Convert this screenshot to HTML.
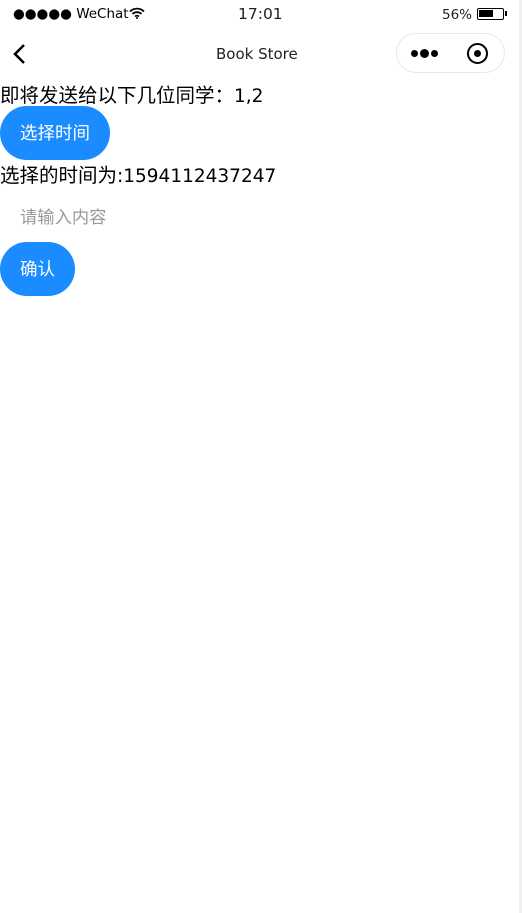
<!DOCTYPE html>
<html><head><meta charset="utf-8"><style>
*{margin:0;padding:0;box-sizing:border-box}
body{width:522px;height:913px;background:#fff;font-family:"DejaVu Sans","Noto Sans CJK SC",sans-serif;position:relative;overflow:hidden;color:#000}
.abs{position:absolute;white-space:nowrap}
.cjk{font-family:"Noto Sans CJK SC",sans-serif}
.num{font-family:"DejaVu Sans",sans-serif;font-size:18.5px}
.btn{position:absolute;left:0;background:#1a8cff;color:#fff;border-radius:27px;height:54px;font-size:17.5px;line-height:54px;text-align:center;font-family:"Noto Sans CJK SC",sans-serif}
</style></head><body>
<div class="abs" style="left:13px;top:4px;font-size:13.5px;line-height:20px;">●●●●● WeChat<svg width="16" height="12" viewBox="0 0 16 12" style="vertical-align:-1px"><path d="M1 4.5a10 10 0 0 1 14 0M3.5 7a6.5 6.5 0 0 1 9 0M6 9.5a3 3 0 0 1 4 0" stroke="#000" stroke-width="1.8" fill="none"/><circle cx="8" cy="11" r="1" fill="#000"/></svg></div>
<div class="abs" style="left:238px;top:4px;font-size:15.5px;line-height:20px;color:#222">17:01</div>
<div class="abs" style="left:442px;top:5px;font-size:13.5px;line-height:20px;color:#222">56%</div>
<div class="abs" style="left:477px;top:8px;width:27px;height:12px;border:1.5px solid #000;border-radius:2px"><div style="position:absolute;left:1px;top:1px;width:14px;height:7px;background:#000"></div></div>
<div class="abs" style="left:505px;top:11px;width:2px;height:5px;background:#000"></div>
<svg class="abs" style="left:10px;top:42px" width="20" height="24" viewBox="0 0 20 24"><path d="M14 3 5 12l9 9" stroke="#000" stroke-width="2.5" fill="none"/></svg>
<div class="abs" style="left:216px;top:43px;font-size:15px;line-height:22px;color:#222">Book Store</div>
<div class="abs" style="left:396px;top:33px;width:109px;height:40px;border:1px solid #e8e8e8;border-radius:20px;background:#fff">
<div style="position:absolute;left:14px;top:16px;width:7px;height:7px;border-radius:50%;background:#000"></div>
<div style="position:absolute;left:23px;top:15px;width:9px;height:9px;border-radius:50%;background:#000"></div>
<div style="position:absolute;left:34px;top:16px;width:7px;height:7px;border-radius:50%;background:#000"></div>
<div style="position:absolute;left:70px;top:9px;width:21px;height:21px;border-radius:50%;border:2.5px solid #000"></div>
<div style="position:absolute;left:77px;top:16px;width:7px;height:7px;border-radius:50%;background:#000"></div>
</div>
<div class="abs cjk" style="left:0;top:81px;font-size:19.5px;line-height:26px">即将发送给以下几位同学：<span class="num">1,2</span></div>
<div class="btn" style="top:106px;width:110px">选择时间</div>
<div class="abs cjk" style="left:0;top:161px;font-size:19.5px;line-height:26px">选择的时间为<span class="num">:1594112437247</span></div>
<div class="abs cjk" style="left:20px;top:204px;font-size:17.3px;line-height:24px;color:#999">请输入内容</div>
<div class="btn" style="top:242px;width:75px">确认</div>
<div class="abs" style="left:519px;top:0;width:3px;height:913px;background:#f0f0f0"></div>
</body></html>
